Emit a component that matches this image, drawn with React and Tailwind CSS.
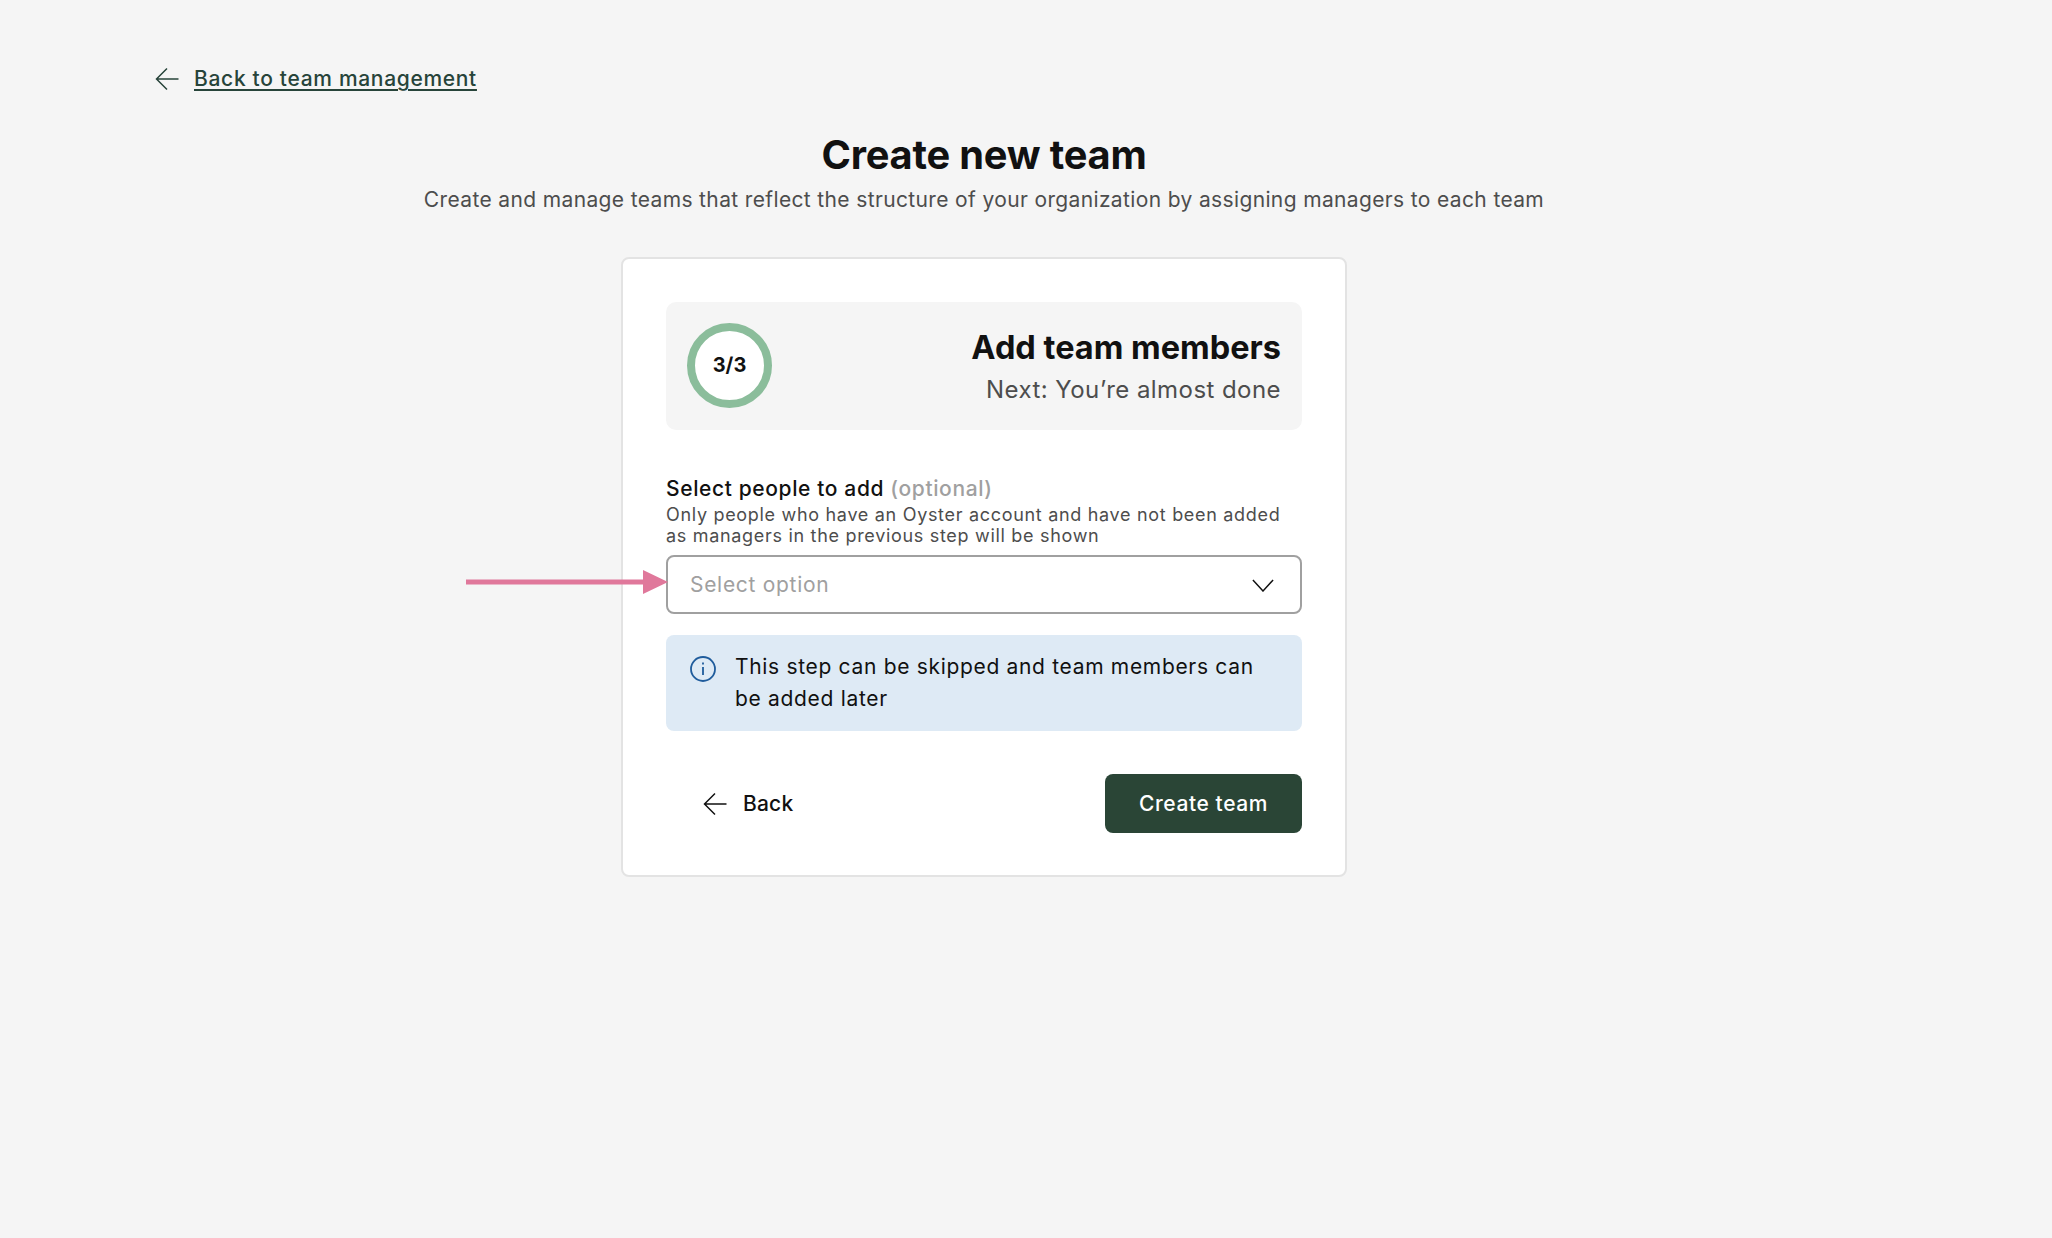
const FONT = "font-['Inter','Noto_Sans',sans-serif]"

function ArrowLeft({ className }) {
  return (
    <svg viewBox="0 0 24 24" fill="none" stroke="currentColor" strokeWidth="1.5" className={className}>
      <path d="M23.5 12H1.5M12 1.5 1.5 12 12 22.5" />
    </svg>
  )
}

export default function App() {
  return (
    <div className={`min-h-[1238px] bg-[#f5f5f5] pl-[155px] pr-[239px] pt-[64px] text-[#111] ${FONT}`}>
      {/* Back link */}
      <a className="flex h-[30px] items-center text-[#27443a]">
        <ArrowLeft className="h-[24px] w-[24px]" />
        <span className="ml-[15px] text-[21px] font-medium tracking-[0.68px] underline decoration-2 underline-offset-[3px]">Back to team management</span>
      </a>

      {/* Header */}
      <div className="mt-[36px] text-center">
        <h1 className="text-[39.8px] font-bold leading-[50px] tracking-[-0.2px]">Create new team</h1>
        <p className="mt-[5px] text-[21px] leading-[30px] tracking-[0.36px] text-[#4d4d4d]">
          Create and manage teams that reflect the structure of your organization by assigning managers to each team
        </p>
      </div>

      {/* Card */}
      <div className="mx-auto mt-[42px] w-[726px] rounded-[8px] border-2 border-[#e3e3e3] bg-white px-[43px] pb-[42px] pt-[43px]">
        <div className="flex h-[128px] items-center justify-between rounded-[10px] bg-[#f5f5f5] px-[21px]">
          <div className="mb-[2px] flex h-[85px] w-[85px] items-center justify-center rounded-full border-[8px] border-[#8bbd9b] bg-white text-[20px] font-bold">
            3/3
          </div>
          <div className="pt-[6px] text-right">
            <div className="text-[32.5px] font-bold leading-[42px]">Add team members</div>
            <div className="text-[24px] leading-[42px] tracking-[0.44px] text-[#4d4d4d]">Next: You’re almost done</div>
          </div>
        </div>

        <div className="mt-[45px] text-[21px] font-medium leading-[28px] tracking-[0.62px]">
          Select people to add <span className="text-[#a0a0a0]">(optional)</span>
        </div>
        <p className="mt-[1px] text-[18px] leading-[21px] tracking-[0.69px] text-[#4d4d4d]">
          Only people who have an Oyster account and have not been added as managers in the previous step will be shown
        </p>

        <div className="relative mt-[9px]">
          <div className="flex h-[59px] items-center justify-between rounded-[8px] border-2 border-[#a0a0a0] pl-[22px] pr-[26px] text-[21px] tracking-[0.7px] text-[#a0a0a0]">
            Select option
            <svg viewBox="0 0 24 14" fill="none" stroke="#111" strokeWidth="1.6" className="mt-[2px] h-[13px] w-[22px]">
              <path d="M1 1l11 12L23 1" />
            </svg>
          </div>
          {/* pink annotation arrow */}
          <svg viewBox="0 0 202 24" className="absolute left-[-200px] top-[15px] h-[24px] w-[202px]">
            <path d="M0 9.500h177V0l25 12-25 12V14.500H0z" fill="#e0789b" />
          </svg>
        </div>

        <div className="mt-[21px] flex h-[96px] rounded-[8px] bg-[#deeaf5] pl-[24px] pr-[20px] pt-[16px]">
          <svg viewBox="0 0 26 26" fill="none" stroke="#1f5c9c" strokeWidth="1.8" className="mt-[5px] h-[26px] w-[26px] shrink-0">
            <circle cx="13" cy="13" r="12" />
            <path d="M13 11v8M13 6.500v2" />
          </svg>
          <p className="ml-[19px] text-[21px] leading-[32px] tracking-[0.68px]">
            This step can be skipped and team members can be added later
          </p>
        </div>

        <div className="mt-[43px] flex items-center justify-between">
          <button className="flex items-center pl-[37px] text-[21px] font-medium tracking-[0.2px]">
            <ArrowLeft className="h-[24px] w-[24px]" />
            <span className="ml-[16px]">Back</span>
          </button>
          <button className="flex h-[59px] w-[197px] items-center justify-center rounded-[8px] bg-[#2a4536] text-[21px] font-medium tracking-[0.6px] text-white">
            Create team
          </button>
        </div>
      </div>
    </div>
  )
}
